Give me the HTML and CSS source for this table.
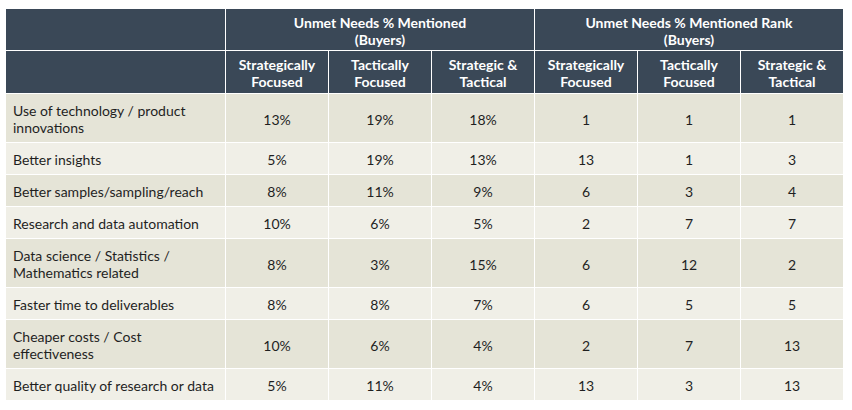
FILE: index.html
```html
<!DOCTYPE html>
<html>
<head>
<meta charset="utf-8">
<link rel="stylesheet" href="styles.css">
</head>
<body>
<table class="grid">
  <colgroup>
    <col class="c-label">
    <col class="c-num"><col class="c-num"><col class="c-num">
    <col class="c-num"><col class="c-num"><col class="c-num">
  </colgroup>
  <thead>
    <tr class="h1">
      <th></th>
      <th colspan="3">Unmet Needs % Mentioned<br>(Buyers)</th>
      <th colspan="3">Unmet Needs % Mentioned Rank<br>(Buyers)</th>
    </tr>
    <tr class="h2">
      <th></th>
      <th>Strategically<br>Focused</th>
      <th>Tactically<br>Focused</th>
      <th>Strategic &amp;<br>Tactical</th>
      <th>Strategically<br>Focused</th>
      <th>Tactically<br>Focused</th>
      <th>Strategic &amp;<br>Tactical</th>
    </tr>
  </thead>
  <tbody>
    <tr class="odd tall"><td class="label">Use of technology / product<br>innovations</td><td>13%</td><td>19%</td><td>18%</td><td>1</td><td>1</td><td>1</td></tr>
    <tr class="even"><td class="label">Better insights</td><td>5%</td><td>19%</td><td>13%</td><td>13</td><td>1</td><td>3</td></tr>
    <tr class="odd"><td class="label">Better samples/sampling/reach</td><td>8%</td><td>11%</td><td>9%</td><td>6</td><td>3</td><td>4</td></tr>
    <tr class="even"><td class="label">Research and data automation</td><td>10%</td><td>6%</td><td>5%</td><td>2</td><td>7</td><td>7</td></tr>
    <tr class="odd tall"><td class="label">Data science / Statistics /<br>Mathematics related</td><td>8%</td><td>3%</td><td>15%</td><td>6</td><td>12</td><td>2</td></tr>
    <tr class="even"><td class="label">Faster time to deliverables</td><td>8%</td><td>8%</td><td>7%</td><td>6</td><td>5</td><td>5</td></tr>
    <tr class="odd tall"><td class="label">Cheaper costs / Cost<br>effectiveness</td><td>10%</td><td>6%</td><td>4%</td><td>2</td><td>7</td><td>13</td></tr>
    <tr class="even"><td class="label">Better quality of research or data</td><td>5%</td><td>11%</td><td>4%</td><td>13</td><td>3</td><td>13</td></tr>
  </tbody>
</table>
</body>
</html>
```
FILE: styles.css
```css
html, body {
  margin: 0;
  padding: 0;
  background: #ffffff;
}
body {
  padding: 8px 5px;
  font-family: "Lato", "Liberation Sans", sans-serif;
}
.grid {
  border-collapse: separate;
  border-spacing: 1px;
  table-layout: fixed;
  width: 839px;
  background: #ffffff;
}
.c-label { width: 219px; }
.c-num { width: 102px; }
.grid th, .grid td {
  box-sizing: border-box;
  padding: 2px 0 0 0;
  vertical-align: middle;
  text-align: center;
  font-size: 14px;
  line-height: 17px;
}
.grid th {
  background: #3a4857;
  color: #ffffff;
  font-weight: 700;
  font-size: 14px;
}
.h1 th { height: 41px; }
.h2 th { height: 42px; }
.grid td {
  color: #1f1f1f;
  height: 31px;
}
.grid tr.tall td { height: 48px; }
.grid tr.odd td { background: #e5e4d7; }
.grid tr.even td { background: #f0efe7; }
.grid td.label {
  text-align: left;
  padding-left: 7px;
}
```
